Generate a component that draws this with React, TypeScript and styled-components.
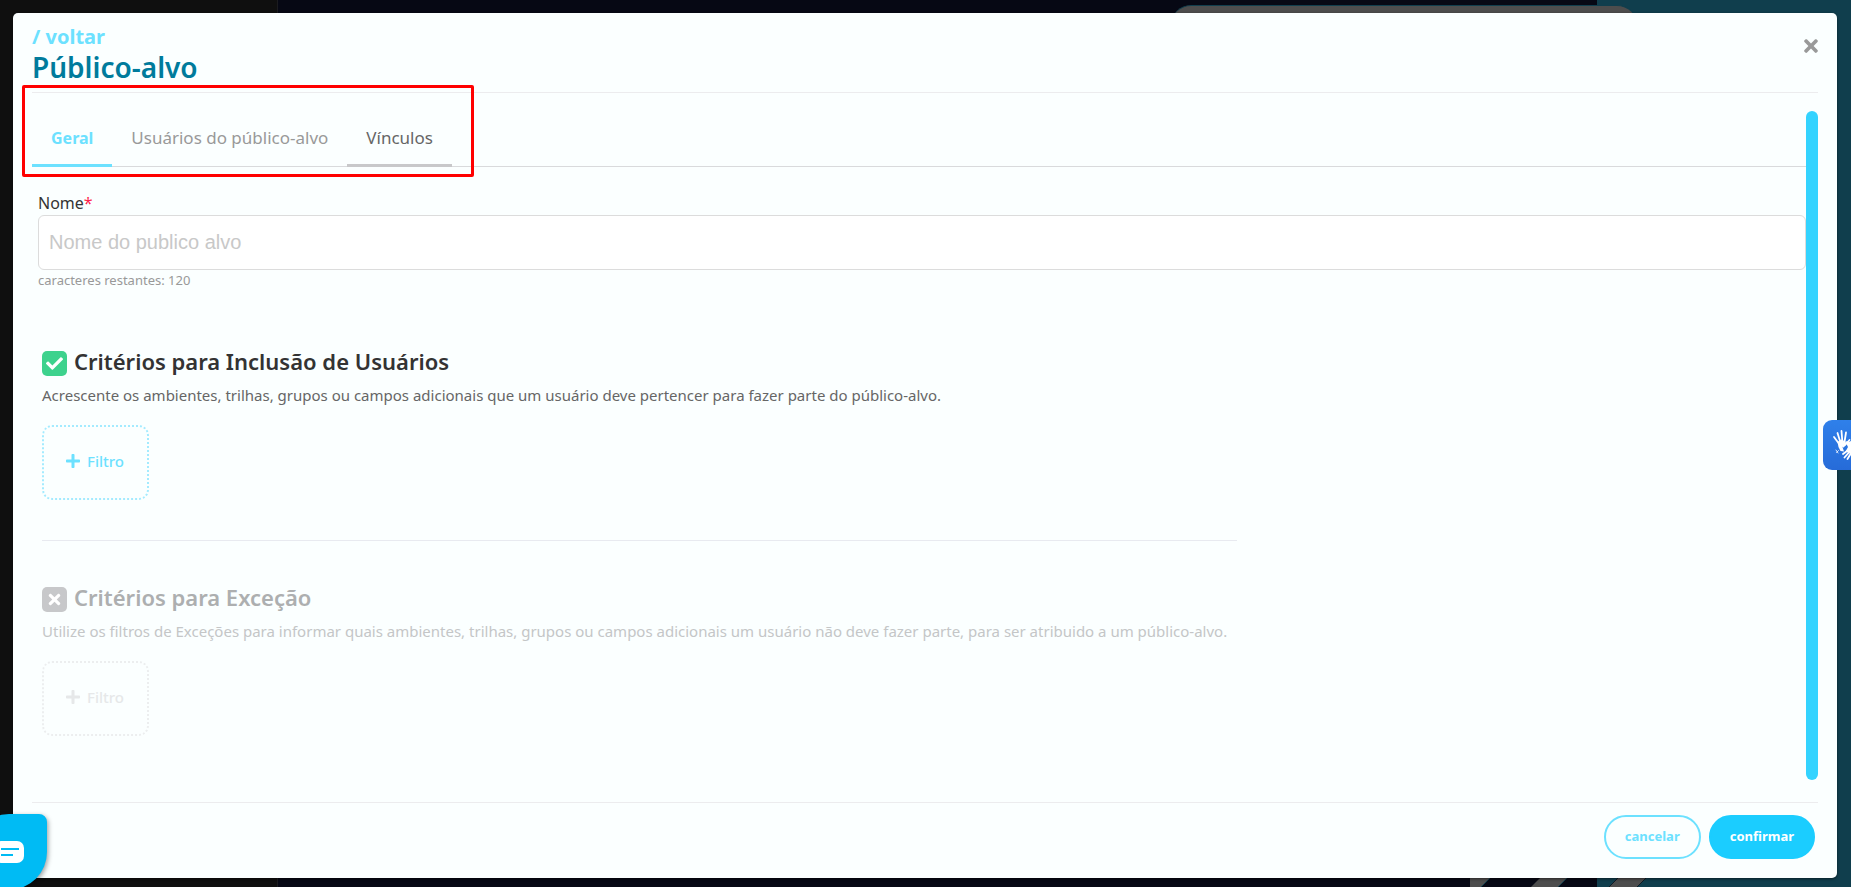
import React, { useState } from 'react';
import styled, { createGlobalStyle } from 'styled-components';
import { FaCheck, FaPlus, FaTimes } from 'react-icons/fa';

const GlobalStyle = createGlobalStyle`
  *, *::before, *::after { box-sizing: border-box; }
  body {
    margin: 0;
    font-family: "Noto Sans", "Open Sans", sans-serif;
    color: #333;
  }
  button, input { font-family: inherit; }
  h1, h2, p { margin: 0; }
`;

const Backdrop = styled.div`
  position: relative;
  display: flex;
  min-height: 100vh;
  padding: 13px 14px 9px 13px;
  overflow: hidden;
  background: linear-gradient(
    to right,
    #0f0f0f 277px,
    #1b1b1f 277px 278px,
    #060814 278px calc(100% - 254px),
    #103e4d calc(100% - 254px)
  );
`;

const TopShape = styled.div`
  position: absolute;
  top: 5px;
  right: 214px;
  width: 466px;
  height: 40px;
  border-top: 1px solid #103e4d;
  border-radius: 20px;
  background: #4d4d4d;
`;

const BottomStripes = styled.svg`
  position: absolute;
  right: 201px;
  bottom: 0;
  width: 180px;
  height: 9px;
`;

const Modal = styled.main`
  position: relative;
  display: flex;
  flex: 1;
  flex-direction: column;
  min-width: 0;
  padding: 0 19px;
  border-radius: 5px;
  background: #fbffff;
  box-shadow: 0 1px 3px rgba(0, 0, 0, 0.5);
`;

const Header = styled.header`
  display: flex;
  justify-content: space-between;
  align-items: flex-start;
  padding: 10px 0 9px;
  border-bottom: 1px solid #ececee;
`;

const BackLink = styled.a`
  display: block;
  font-size: 20px;
  font-weight: 700;
  line-height: 28px;
  color: #6ce1ff;
  text-decoration: none;
`;

const Title = styled.h1`
  font-size: 28px;
  font-weight: 600;
  line-height: 32px;
  color: #007b9c;
`;

const CloseButton = styled.button`
  display: flex;
  margin-top: 13px;
  padding: 0;
  border: 0;
  background: none;
  font-size: 20px;
  color: #999;
  cursor: pointer;

  svg { width: 14px; }
`;

const Body = styled.div`
  display: flex;
  flex: 1;
  margin: 18px 0 22px;
`;

const Content = styled.div`
  flex: 1;
  min-width: 0;
`;

const ScrollThumb = styled.div`
  width: 12px;
  border-radius: 6px;
  background: #33d3ff;
`;

const Tabs = styled.div`
  position: relative;
  display: flex;
  border-bottom: 1px solid #d9dadc;
`;

const Highlight = styled.div`
  position: absolute;
  top: -26px;
  left: -10px;
  width: 452px;
  height: 92px;
  border: 3px solid #f00;
  border-radius: 2px;
  pointer-events: none;
`;

type TabState = 'active' | 'hover' | 'idle';
const tabText = { active: '#6ce1ff', hover: '#666', idle: '#999' };
const tabLine = { active: '#6ce1ff', hover: '#c8c8ca', idle: 'transparent' };

const Tab = styled.button<{ $state: TabState }>`
  margin-bottom: -1px;
  padding: 15px 19px 14px;
  border: 0;
  border-bottom: 3px solid ${(p) => tabLine[p.$state]};
  background: none;
  font-size: ${(p) => (p.$state === 'active' ? 16 : 17)}px;
  font-weight: ${(p) => (p.$state === 'active' ? 700 : 400)};
  line-height: 24px;
  color: ${(p) => tabText[p.$state]};
  cursor: pointer;
`;

const Field = styled.div`
  display: flex;
  flex-direction: column;
  padding: 24px 0 0 6px;
`;

const Label = styled.label`
  font-size: 16px;
  line-height: 24px;
`;

const Required = styled.span`
  color: #ff1f4b;
`;

const TextInput = styled.input`
  height: 55px;
  padding: 0 10px;
  border: 1px solid #dcdcdc;
  border-radius: 6px;
  background: #fff;
  && { font-family: "Liberation Sans", Arial, sans-serif; }
  font-size: 20px;
  color: #333;

  &::placeholder { color: #c8c8c8; opacity: 1; }
`;

const Helper = styled.small`
  font-size: 13px;
  line-height: 20px;
  color: #999;
`;

const CriteriaList = styled.div`
  max-width: 1205px;
  padding: 56px 0 0 10px;
`;

const Divider = styled.hr`
  height: 1px;
  margin: 40px 0 41px;
  border: 0;
  background: #e8eaf0;
`;

const CriteriaHead = styled.div`
  display: flex;
  align-items: flex-end;
  gap: 7px;
`;

const CheckWrap = styled.span`
  display: grid;
  place-items: center;

  > * { grid-area: 1 / 1; }
  svg { pointer-events: none; color: #fff; }
`;

const CheckInput = styled.input<{ $off: boolean }>`
  width: 25px;
  height: 25px;
  margin: 0;
  appearance: none;
  border-radius: 5px;
  background: ${(p) => (p.$off ? '#c7c8ca' : '#3dd28d')};
  cursor: pointer;
`;

const CriteriaTitle = styled.label<{ $off: boolean }>`
  font-size: 22px;
  font-weight: 600;
  line-height: 30px;
  color: ${(p) => (p.$off ? '#adafb0' : '#333')};
`;

const Description = styled.p<{ $off: boolean }>`
  margin-top: 9px;
  font-size: 15px;
  line-height: 20px;
  color: ${(p) => (p.$off ? '#c4c6c7' : '#666')};
`;

const FilterButton = styled.button`
  display: flex;
  justify-content: center;
  align-items: center;
  gap: 6px;
  width: 107px;
  height: 75px;
  margin-top: 20px;
  padding: 0 2px 3px 0;
  border: 2px dotted #a4ebff;
  border-radius: 10px;
  background: none;
  font-size: 15px;
  font-weight: 500;
  color: #6ce1ff;
  cursor: pointer;

  &:disabled {
    border-color: #eceeef;
    color: #e6e8e9;
    cursor: default;
  }
`;

const Footer = styled.footer`
  display: flex;
  justify-content: flex-end;
  gap: 8px;
  padding: 12px 3px 19px;
  border-top: 1px solid #ececee;
`;

const PillButton = styled.button<{ $solid?: boolean }>`
  height: 44px;
  padding: 0 19px 3px;
  border: 2px solid ${(p) => (p.$solid ? '#1bcdff' : '#6ce1ff')};
  border-radius: 22px;
  background: ${(p) => (p.$solid ? '#1bcdff' : 'transparent')};
  font-size: 13px;
  font-weight: 700;
  color: ${(p) => (p.$solid ? '#fff' : '#6ce1ff')};
  cursor: pointer;
`;

const ChatButton = styled.button`
  position: fixed;
  bottom: -3px;
  left: -29px;
  width: 76px;
  height: 76px;
  padding: 0;
  border: 0;
  border-radius: 38px 8px 38px 38px;
  background: #00bbf4;
  box-shadow: 1px 2px 5px rgba(0, 0, 0, 0.4);
  cursor: pointer;

  svg { display: block; }
`;

const SignLanguageButton = styled.button`
  position: fixed;
  top: 420px;
  right: 0;
  width: 28px;
  height: 50px;
  padding: 0;
  border: 0;
  border-radius: 9px 0 0 9px;
  background: linear-gradient(#2f80ea, #266bd8);
  cursor: pointer;

  svg { display: block; }
`;

interface CriteriaProps {
  id: string;
  title: string;
  text: string;
  initial: boolean;
}

function Criteria({ id, title, text, initial }: CriteriaProps) {
  const [on, setOn] = useState(initial);
  return (
    <section>
      <CriteriaHead>
        <CheckWrap>
          <CheckInput id={id} type="checkbox" checked={on} $off={!on} onChange={() => setOn(!on)} />
          {on ? <FaCheck size={17} /> : <FaTimes size={17} />}
        </CheckWrap>
        <CriteriaTitle htmlFor={id} $off={!on}>{title}</CriteriaTitle>
      </CriteriaHead>
      <Description $off={!on}>{text}</Description>
      <FilterButton type="button" disabled={!on}>
        <FaPlus size={16} />
        Filtro
      </FilterButton>
    </section>
  );
}

export default function App() {
  const [name, setName] = useState('');
  return (
    <Backdrop>
      <GlobalStyle />
      <TopShape />
      <BottomStripes viewBox="0 0 180 9" aria-hidden="true">
        <path d="M0 0H20L11 9H0Z" fill="#4d4d4d" />
        <path d="M70 0H97L88 9H61Z" fill="#4d4d4d" />
        <path d="M148 0H176L167 9H139Z" fill="#4d4d4d" />
        <path d="M20 0L11 9M97 0L88 9" stroke="#103e4d" />
        <path d="M148 0L139 9M176 0L167 9" stroke="#111a24" />
      </BottomStripes>

      <Modal>
        <Header>
          <div>
            <BackLink href="#voltar">/ voltar</BackLink>
            <Title>Público-alvo</Title>
          </div>
          <CloseButton type="button" aria-label="Fechar"><FaTimes /></CloseButton>
        </Header>

        <Body>
          <Content>
            <Tabs role="tablist">
              <Tab type="button" role="tab" aria-selected="true" $state="active">Geral</Tab>
              <Tab type="button" role="tab" aria-selected="false" $state="idle">Usuários do público-alvo</Tab>
              <Tab type="button" role="tab" aria-selected="false" $state="hover">Vínculos</Tab>
              <Highlight />
            </Tabs>

            <Field>
              <Label htmlFor="nome">Nome<Required>*</Required></Label>
              <TextInput
                id="nome"
                maxLength={120}
                placeholder="Nome do publico alvo"
                value={name}
                onChange={(e) => setName(e.target.value)}
              />
              <Helper>caracteres restantes: {120 - name.length}</Helper>
            </Field>

            <CriteriaList>
              <Criteria
                id="inclusao"
                initial
                title="Critérios para Inclusão de Usuários"
                text="Acrescente os ambientes, trilhas, grupos ou campos adicionais que um usuário deve pertencer para fazer parte do público-alvo."
              />
              <Divider />
              <Criteria
                id="excecao"
                initial={false}
                title="Critérios para Exceção"
                text="Utilize os filtros de Exceções para informar quais ambientes, trilhas, grupos ou campos adicionais um usuário não deve fazer parte, para ser atribuido a um público-alvo."
              />
            </CriteriaList>
          </Content>
          <ScrollThumb />
        </Body>

        <Footer>
          <PillButton type="button">cancelar</PillButton>
          <PillButton type="button" $solid>confirmar</PillButton>
        </Footer>
      </Modal>

      <ChatButton type="button" aria-label="Chat">
        <svg width="76" height="76" viewBox="0 0 76 76">
          <rect x="23" y="27" width="30" height="22" rx="7" fill="#fff" />
          <path d="M30 35H48M30 41H42" stroke="#00bbf4" strokeWidth="2" />
        </svg>
      </ChatButton>

      <SignLanguageButton type="button" aria-label="Libras">
        <svg width="28" height="50" viewBox="0 0 28 50" fill="none" stroke="#fff" strokeLinecap="round">
          <path d="M11 17L15.500 23M14.500 13L17 21M18.500 11L19.300 21M23 12.500L21.500 22M26.500 20L22 25" strokeWidth="1.800" />
          <path d="M14.500 22L18 19.500L22.500 21.500L23 24L19.500 27L21 31.500L17.500 31L15.500 27Z" fill="#fff" stroke="none" />
          <path d="M29 24L24 22L20.500 26.500M28 28L20 34M29 29L21.500 37.500M30 30L24.500 39" strokeWidth="1.800" />
          <path d="M23 23L28 21V34L22.500 31.500L25 27Z" fill="#fff" stroke="none" />
          <path d="M13 30L15 33M15.500 30.500L13.500 32.500" strokeWidth="1" opacity="0.8" />
        </svg>
      </SignLanguageButton>
    </Backdrop>
  );
}
